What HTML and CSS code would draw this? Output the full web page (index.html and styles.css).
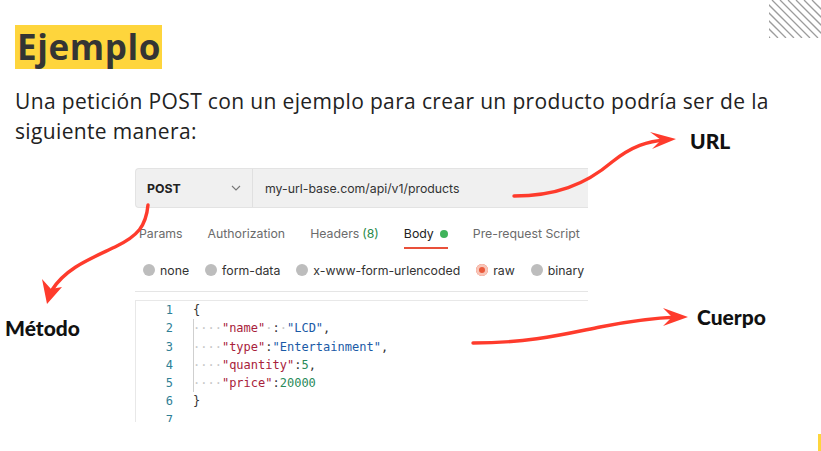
FILE: index.html
```html
<!DOCTYPE html>
<html lang="es">
<head>
<meta charset="utf-8">
<title>Ejemplo</title>
<link rel="stylesheet" href="styles.css">
</head>
<body>
<div class="slide">
  <h1 class="title">Ejemplo</h1>
  <p class="intro">Una petición POST con un ejemplo para crear un producto podría ser de la siguiente manera:</p>

  <div class="shot">
    <div class="urlbar">
      <div class="method">
        <span>POST</span>
        <svg class="chev" width="10" height="6" viewBox="0 0 10 6"><path d="M1 1l4 4 4-4" fill="none" stroke="#777" stroke-width="1.1"/></svg>
      </div>
      <div class="url">my-url-base.com/api/v1/products</div>
    </div>

    <div class="tabs">
      <span class="tab">Params</span>
      <span class="tab">Authorization</span>
      <span class="tab">Headers <span class="count">(8)</span></span>
      <span class="tab active">Body <span class="dot"></span></span>
      <span class="tab">Pre-request Script</span>
    </div>

    <div class="radios">
      <span class="radio"><span class="circle"></span>none</span>
      <span class="radio"><span class="circle"></span>form-data</span>
      <span class="radio"><span class="circle"></span>x-www-form-urlencoded</span>
      <span class="radio"><span class="circle on"></span>raw</span>
      <span class="radio"><span class="circle"></span>binary</span>
    </div>

    <div class="sep"></div>

    <div class="editor">
      <div class="row"><span class="ln">1</span><span class="code">{</span></div>
      <div class="row"><span class="ln">2</span><span class="code guide"><span class="ws">····</span><span class="k">"name"</span><span class="ws">·</span>:<span class="ws">·</span><span class="s">"LCD"</span>,</span></div>
      <div class="row"><span class="ln">3</span><span class="code guide"><span class="ws">····</span><span class="k">"type"</span>:<span class="s">"Entertainment"</span>,</span></div>
      <div class="row"><span class="ln">4</span><span class="code guide"><span class="ws">····</span><span class="k">"quantity"</span>:<span class="n">5</span>,</span></div>
      <div class="row"><span class="ln">5</span><span class="code guide"><span class="ws">····</span><span class="k">"price"</span>:<span class="n">20000</span></span></div>
      <div class="row"><span class="ln">6</span><span class="code">}</span></div>
      <div class="row"><span class="ln">7</span><span class="code"></span></div>
    </div>
  </div>

  <svg class="arrows" width="821" height="451" viewBox="0 0 821 451">
    <g fill="none" stroke="#fe3b2c" stroke-width="3.4" stroke-linecap="round">
      <path d="M514 196 C 555 196, 585 185, 612 162 C 632 146, 648 141, 666 140"/>
      <path d="M148 205 C 146 226, 138 236, 115 247 C 90 259, 66 268, 52 290"/>
      <path d="M473 343 C 530 343, 565 334, 600 327 C 630 321, 652 318, 678 317"/>
    </g>
    <g fill="#fe3b2c">
      <path d="M676 139 L650 132 L661 140 L652 149 Z"/>
      <path d="M47 304 L42 279 L51 289 L62 287 Z"/>
      <path d="M688 317 L663 308 L672 317 L663 326 Z"/>
    </g>
  </svg>

  <span class="label label-url">URL</span>
  <span class="label label-metodo">Método</span>
  <span class="label label-cuerpo">Cuerpo</span>

  <svg class="stripes" width="52" height="38" viewBox="0 0 52 38">
    <g stroke="#9c9c9c" stroke-width="1.3">
      <line x1="-37" y1="0" x2="1" y2="38"/>
      <line x1="-29" y1="0" x2="9" y2="38"/>
      <line x1="-21" y1="0" x2="17" y2="38"/>
      <line x1="-13" y1="0" x2="25" y2="38"/>
      <line x1="-5" y1="0" x2="33" y2="38"/>
      <line x1="3" y1="0" x2="41" y2="38"/>
      <line x1="11" y1="0" x2="49" y2="38"/>
      <line x1="19" y1="0" x2="57" y2="38"/>
      <line x1="27" y1="0" x2="65" y2="38"/>
      <line x1="35" y1="0" x2="73" y2="38"/>
      <line x1="43" y1="0" x2="81" y2="38"/>
    </g>
  </svg>
  <div class="corner"></div>
</div>
</body>
</html>
```

FILE: styles.css
```css
* { box-sizing: border-box; }
html, body { margin: 0; padding: 0; background: #fff; }
.slide {
  position: relative;
  width: 821px;
  height: 451px;
  overflow: hidden;
  font-family: "Lato", "Liberation Sans", sans-serif;
  color: #222;
}
.title {
  display: inline-block;
  margin: 25px 0 0 15px;
  padding: 0 1px 0 2px;
  height: 44px;
  line-height: 44px;
  background: #fed53c;
  color: #343434;
  font-family: "Open Sans", sans-serif;
  font-weight: 700;
  font-size: 35px;
  letter-spacing: 0.6px;
}
.intro {
  margin: 17px 0 0 15px;
  width: 770px;
  font-family: "Open Sans", "Liberation Sans", sans-serif;
  font-size: 21px;
  line-height: 30px;
  font-weight: 400;
  letter-spacing: 0.35px;
  color: #222;
}
.shot {
  margin: 22px 0 0 135px;
  width: 453px;
  font-family: "Inter", "Liberation Sans", sans-serif;
  font-size: 12.3px;
  color: #333;
  white-space: nowrap;
}
.urlbar {
  display: flex;
  height: 40px;
  background: #f0f0f0;
  border: 1px solid #e3e3e3;
  border-right: none;
  border-radius: 4px 0 0 4px;
}
.method {
  width: 117px;
  display: flex;
  align-items: center;
  justify-content: space-between;
  padding: 0 11px 0 11px;
  border-right: 1px solid #e0e0e0;
  font-weight: 700;
  color: #222;
}
.url {
  display: flex;
  align-items: center;
  padding-left: 12px;
  color: #333;
}
.tabs {
  display: flex;
  gap: 25px;
  height: 42px;
  padding: 18px 0 0 4px;
  color: #6b6b6b;
}
.tab {
  position: relative;
  height: 24px;
  line-height: 15px;
  display: inline-flex;
  align-items: flex-start;
}
.tab .count { color: #2a8a4a; margin-left: 3px; }
.tab.active { color: #222; }
.tab.active::after {
  content: "";
  position: absolute;
  left: 0; right: 0; bottom: 1px;
  height: 2px;
  background: #e9503a;
}
.dot {
  display: inline-block;
  width: 8px; height: 8px;
  border-radius: 50%;
  background: #3fb35a;
  margin: 4px 0 0 6px;
}
.radios {
  display: flex;
  align-items: center;
  gap: 16px;
  height: 40px;
  padding: 0 0 0 8px;
  color: #333;
}
.radio { display: inline-flex; align-items: center; gap: 5px; flex: none; }
.circle {
  width: 12px; height: 12px;
  border-radius: 50%;
  background: #bdbdbd;
}
.circle.on {
  background: #ea5a3c;
  box-shadow: inset 0 0 0 3px #f8c5b8;
}
.sep {
  height: 1px;
  background: #e5e5e5;
  margin-top: 1px;
}
.editor {
  margin-top: 8px;
  height: 122px;
  overflow: hidden;
  border-top: 1px solid #e8e8e8;
  border-left: 1px solid #e8e8e8;
  font-family: "DejaVu Sans Mono", "Liberation Mono", monospace;
  font-size: 12px;
  line-height: 18.3px;
}
.row { display: flex; white-space: pre; }
.ln {
  width: 37px;
  text-align: right;
  color: #2f7f96;
}
.code {
  margin-left: 20px;
  color: #333;
  min-height: 18.3px;
}
.code.guide { border-left: 1px solid #cfcfcf; }
.code.guide .ws:first-child { margin-left: -1px; }
.ws { color: #c8c8c8; }
.k { color: #a8213a; }
.s { color: #1a5aa6; }
.n { color: #2a8a5a; }

.arrows {
  position: absolute;
  left: 0; top: 0;
  pointer-events: none;
}
.label {
  position: absolute;
  font-family: "Lato", "Liberation Sans", sans-serif;
  font-weight: 900;
  color: #111;
  font-size: 21px;
  line-height: 24px;
}
.label-url { left: 690px; top: 129px; }
.label-metodo { left: 5px; top: 316px; }
.label-cuerpo { left: 697px; top: 305px; }
.stripes {
  position: absolute;
  top: 0; right: 0;
}
.corner {
  position: absolute;
  right: 0; bottom: 0;
  width: 3px; height: 17px;
  background: #fed53c;
}
```
